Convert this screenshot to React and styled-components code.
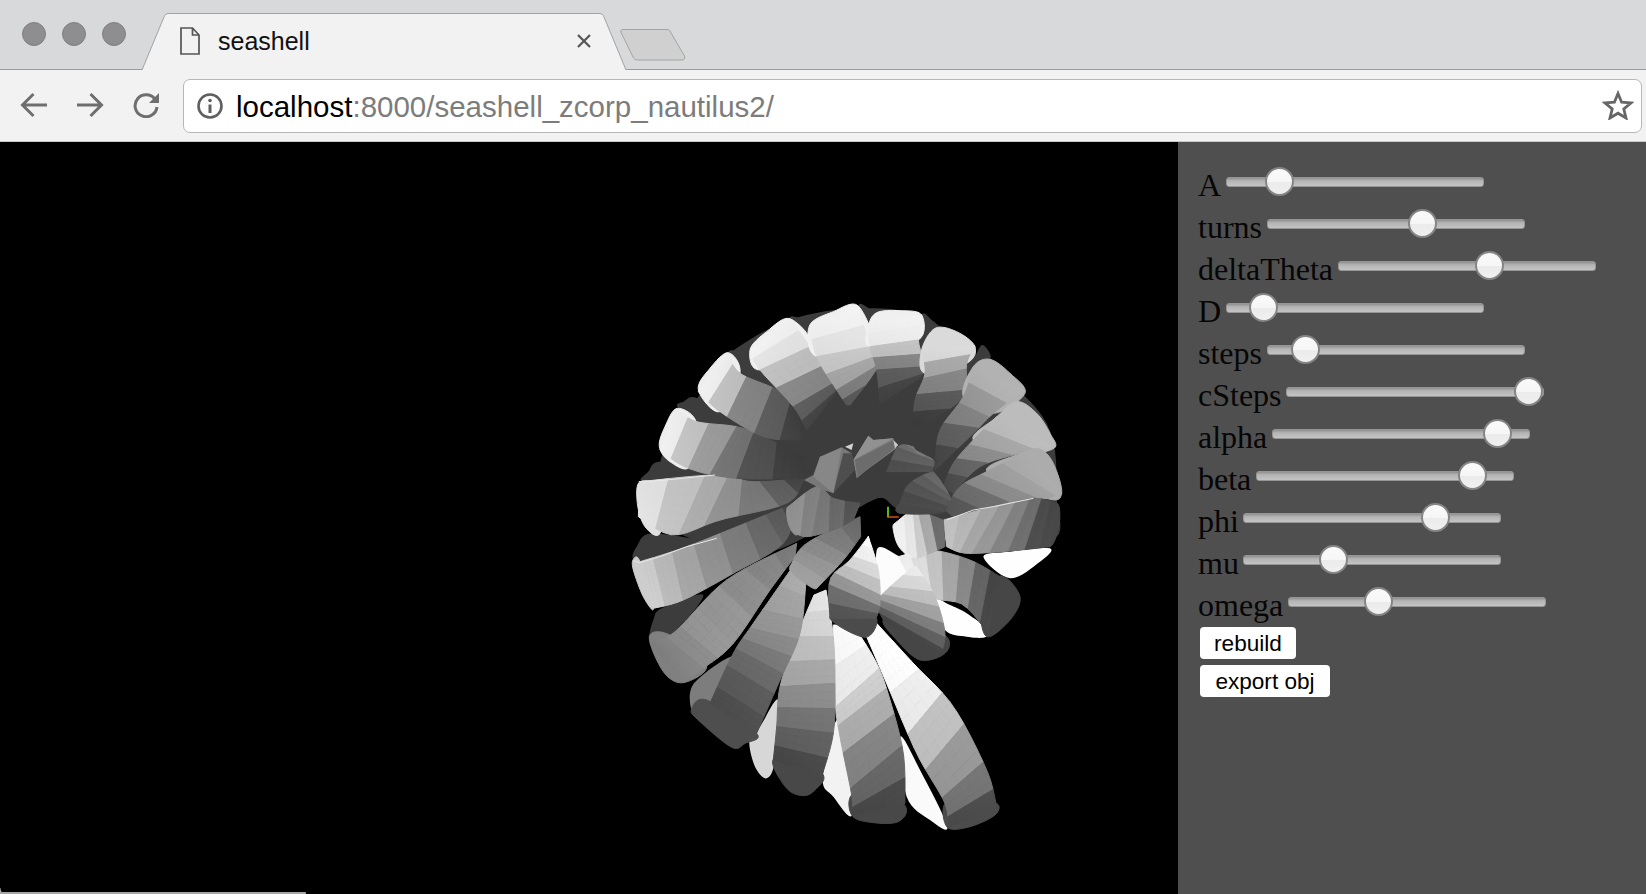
import React from 'react';
import styled, { createGlobalStyle } from 'styled-components';

const Global = createGlobalStyle`
  html, body { margin: 0; padding: 0; height: 894px; overflow: hidden; background: #000; }
  #root { height: 894px; }
`;

const Page = styled.div`
  width: 1646px; height: 894px; display: flex; flex-direction: column; overflow: hidden;
`;
const TabStrip = styled.div`
  height: 70px; box-sizing: border-box; background: #d8d9db; border-bottom: 1px solid #9c9c9c;
  display: flex; align-items: flex-start; padding-left: 22px;
`;
const Lights = styled.div`
  display: flex; gap: 16px; margin-top: 22px;
`;
const Light = styled.span`
  width: 24px; height: 24px; box-sizing: border-box; border-radius: 50%;
  background: #8e8e90; border: 1px solid #7f7f81;
`;
const Tab = styled.div`
  position: relative; width: 484px; height: 57px; margin: 13px 0 0 16px; box-sizing: border-box;
  display: flex; align-items: center; padding: 0 34px 0 38px; gap: 18px;
`;
const TabShape = styled.svg`
  position: absolute; left: 0; top: 0; width: 484px; height: 57px;
`;
const TabTitle = styled.span`
  position: relative; flex: 1; font: 25px "Liberation Sans", Arial, sans-serif; color: #111;
`;
const TabIcon = styled.svg`
  position: relative; width: 20px; height: 28px; flex: none; margin-top: -2px;
`;
const CloseIcon = styled.svg`
  position: relative; width: 16px; height: 16px; flex: none; margin-top: -2px;
`;
const NewTab = styled.svg`
  width: 66px; height: 32px; margin: 29px 0 0 -6px; flex: none;
`;
const Toolbar = styled.div`
  height: 72px; box-sizing: border-box; background: #f2f2f2; border-bottom: 1px solid #c9c9c9;
  display: flex; align-items: center; padding: 0 4px 1px 20px;
`;
const NavIcon = styled.svg`
  width: 28px; height: 26px; margin-right: ${p => p.$gap}px; flex: none;
`;
const Omnibox = styled.div`
  flex: 1; height: 54px; box-sizing: border-box; background: #fff; border: 1px solid #b7b7b7; border-radius: 7px;
  display: flex; align-items: center; padding: 0 7px 0 12px; margin-top: 2px;
`;
const InfoIcon = styled.svg`
  width: 28px; height: 28px; flex: none; margin-right: 12px;
`;
const Url = styled.div`
  flex: 1; font: 29.5px "Liberation Sans", Arial, sans-serif; color: #7c7c7c; white-space: nowrap; padding-top: 2px;
`;
const Host = styled.span`
  color: #000;
`;
const StarIcon = styled.svg`
  width: 32px; height: 30px; flex: none; margin-top: -2px;
`;
const Stage = styled.div`
  flex: 1; display: flex; min-height: 0;
`;
const Canvas = styled.div`
  position: relative; width: 1178px; flex: none; background: #000; box-sizing: border-box;
  padding: 148px 0 0 620px;
  &::after {
    content: ''; position: absolute; left: 0; bottom: 0; width: 306px; height: 2px;
    background: #a6a6a6; border-top-right-radius: 1px;
  }
  &::before {
    content: ''; position: absolute; left: 0; bottom: 0; width: 8px; height: 6px;
    background: radial-gradient(circle at 100% 0, transparent 7px, #b4b4b4 8px);
  }
`;
const Shell = styled.svg`
  display: block; width: 460px; height: 600px;
`;
const Panel = styled.div`
  flex: 1; background: #4f4f4f; box-sizing: border-box; padding: 22px 0 0 20px;
  display: flex; flex-direction: column; align-items: flex-start;
`;
const Row = styled.div`
  height: 42px; display: flex; align-items: flex-start;
`;
const Label = styled.label`
  font: 32px/42px "Liberation Serif", "Times New Roman", serif; color: #060606;
`;
const Slider = styled.input`
  -webkit-appearance: none; appearance: none; background: transparent;
  width: 258px; height: 29px; margin: 3px 0 0 4.5px; padding: 0; display: block;
  &::-webkit-slider-runnable-track {
    height: 10px; box-sizing: border-box; border-radius: 3px; border: 1px solid #969696;
    background: linear-gradient(#8f8f8f 0, #b4b4b4 35%, #c4c4c4 100%);
  }
  &::-webkit-slider-thumb {
    -webkit-appearance: none; appearance: none; width: 29px; height: 29px; margin-top: -10.5px;
    box-sizing: border-box; border-radius: 50%; border: 2px solid #858585;
    background: linear-gradient(#fafafa 0, #f6f6f6 50%, #ebebeb 52%, #f0f0f0 100%);
  }
`;
const Action = styled.button`
  width: ${p => p.$w}px; height: 32px; box-sizing: border-box; border: 0; border-radius: 4px; background: #fff; color: #000;
  font: 22.6px "Liberation Sans", Arial, sans-serif; padding: 2px 0 0; margin: 1px 0 5px 2px; display: block;
`;

const sliders = [
  ['A', 168], ['turns', 619], ['deltaTheta', 599], ['D', 99], ['steps', 102], ['cSteps', 1000],
  ['alpha', 924], ['beta', 886], ['phi', 778], ['mu', 329], ['omega', 333],
];

/* ---- the shell drawing: units are 1/3 px, origin at page (620,290) ---- */
const z5 = pts => pts.map(([x, y]) => [x, y + 750]);
const segment = (a, b, c, d, f) => [0, 1].map(k =>
  0.5 * (2 * b[k] + (c[k] - a[k]) * f + (2 * a[k] - 5 * b[k] + 4 * c[k] - d[k]) * f * f + (3 * b[k] - a[k] - 3 * c[k] + d[k]) * f * f * f));
const cr = (p, t) => {
  const n = p.length - 1;
  const s = Math.min(t * n, n - 1e-6);
  const i = Math.floor(s);
  return segment(p[Math.max(i - 1, 0)], p[i], p[i + 1], p[Math.min(i + 2, n)], s - i);
};
const smooth = p => {
  const out = [];
  const n = p.length;
  for (let i = 0; i < n; i++) {
    for (let k = 0; k < 8; k++) out.push(segment(p[(i + n - 1) % n], p[i], p[(i + 1) % n], p[(i + 2) % n], k / 8));
  }
  return out;
};
const grey = v => { const c = Math.max(0, Math.min(255, Math.round(v))); return `rgb(${c},${c},${c})`; };
const poly = pts => pts.map(p => p[0].toFixed(1) + ',' + p[1].toFixed(1)).join(' ');
const buildRib = ({ l, r, s, sub = 3, cols = 5, cap, capC }) => {
  const out = [];
  const rows = s.length * sub;
  if (cap) out.push({ pts: smooth(cap), c: capC === undefined ? s[0] : capC });
  for (let i = 0; i < rows; i++) {
    const t0 = i / rows, t1 = (i + 1) / rows;
    const major = Math.floor(i / sub);
    const l0 = cr(l, t0), l1 = cr(l, t1), r0 = cr(r, t0), r1 = cr(r, t1);
    for (let j = 0; j < cols; j++) {
      const a = j / cols, b = (j + 1) / cols;
      const mix = (p, q, k) => [p[0] + (q[0] - p[0]) * k, p[1] + (q[1] - p[1]) * k];
      const v = s[major] + (a - 0.5) * 5 + ((i % sub) - 1) * -1;
      out.push({ pts: [mix(l0, r0, a), mix(l0, r0, b), mix(l1, r1, b), mix(l1, r1, a)], c: v });
    }
  }
  return out;
};

const D = 60; // interior dark
const patches = [
  // dark backing silhouette
  { pts: [[330,190],[510,90],[715,55],[905,80],[1090,210],[1280,400],[1310,620],[1290,750],[980,690],[840,660],[790,625],[740,640],[600,720],[400,790],[140,700],[130,480],[250,300]], c: D },
  // interior lenses, back to front
  { pts: z5([[840,590],[900,690],[982,860],[930,840],[860,770]]), c: 250 },
  { pts: z5([[650,540],[690,640],[697,825],[640,770],[608,715]]), c: 242 },
  { pts: z5([[475,480],[465,660],[440,715],[405,680],[388,600],[420,560]]), c: 215 },
  { pts: z5([[340,350],[270,490],[240,530],[214,510],[222,430]]), c: 125 },
  { pts: z5([[160,280],[105,300],[88,290],[100,240],[125,205],[250,165]]), c: D },
  { pts: [[290,770],[110,820],[42,810],[50,770],[100,730]], c: D },
  { pts: [[280,555],[75,575],[85,545],[125,515]], c: D },
  { pts: [[172,350],[190,335],[232,325],[340,405],[230,395]], c: D },
  { pts: [[325,190],[350,180],[385,182],[430,250],[360,250]], c: D },
  { pts: [[510,88],[545,85],[570,95],[590,190]], c: D },
  { pts: [[715,50],[745,55],[765,90],[745,170]], c: D },
  { pts: [[905,75],[935,90],[950,115],[905,180]], c: D },
  { pts: [[1085,165],[1112,205],[1060,230]], c: D },
  { pts: z5([[1090,50],[1170,35],[1290,25],[1260,65],[1170,115]]), c: 254 },
  { pts: z5([[945,180],[990,195],[1040,220],[1105,270],[1095,292],[1040,290],[975,270]]), c: 254 },
  { pts: z5([[770,30],[830,45],[880,85],[790,190]]), c: 252 },
];

const ribs = [
  // tail, biggest first
  { l: z5([[740,290],[800,430],[890,640],[975,790],[982,862]]), r: z5([[770,250],[880,370],[1000,500],[1100,690],[1130,800]]),
    s: [255,253,236,192,152,116,76], capC: 76, cap: z5([[982,862],[1050,860],[1125,825],[1130,790],[1050,780],[975,790]]) },
  { l: z5([[640,255],[645,480],[660,590],[695,765],[697,825]]), r: z5([[700,255],[770,370],[810,480],[850,640],[855,790]]),
    s: [250,236,205,172,132,102,72], capC: 72, cap: z5([[697,828],[760,848],[835,845],[857,800],[780,740],[695,765]]) },
  { l: z5([[582,165],[530,290],[480,440],[470,560],[460,660]]), r: z5([[618,150],[640,290],[645,430],[640,580],[605,710]]),
    s: [228,212,190,166,140,115,95,72], capC: 72, cap: z5([[458,662],[500,745],[550,767],[585,750],[610,705],[530,640]]) },
  { l: z5([[515,85],[400,250],[340,340],[270,490]]), r: z5([[558,120],[540,280],[480,420],[410,580]]),
    s: [172,162,150,136,120,105,90,78], capC: 78, cap: z5([[214,510],[260,480],[410,580],[375,610],[335,622],[240,545]]) },
  { l: z5([[530,10],[320,120],[165,275],[90,310]]), r: z5([[525,50],[450,150],[340,310],[250,385],[190,428]]),
    s: [125,135,142,150,150,140,132,128], cols: 6, capC: 128, cap: z5([[88,290],[150,285],[260,375],[190,428],[130,395]]) },
  { l: [[60,815],[200,770],[400,690],[522,640]], r: [[100,955],[190,930],[340,850],[490,760],[522,660]],
    s: [205,185,165,145,125,105,92,72], cols: 6, cap: [[40,808],[60,815],[100,955],[70,920],[40,840]] },
  { l: [[60,575],[285,555],[400,575],[550,565]], r: [[55,680],[160,735],[300,690],[500,640],[550,570]],
    s: [225,195,172,145,120,95,70], cols: 6, cap: [[60,575],[52,640],[75,710],[120,730],[130,600]] },
  { l: [[172,360],[230,395],[350,410],[430,440],[550,500]], r: [[120,480],[205,535],[350,565],[550,565]],
    s: [238,195,155,115,80,62], sub: 4, cap: [[172,355],[135,410],[118,470],[150,515],[210,530],[230,400]] },
  { l: [[325,190],[360,250],[480,305],[540,380]], r: [[235,305],[300,365],[430,440],[540,450]],
    s: [238,192,132,92,65], sub: 4, cap: [[325,188],[270,235],[235,300],[300,365],[360,250]] },
  { l: [[510,88],[570,170],[640,280],[640,320]], r: [[390,185],[420,240],[520,350],[560,420]],
    s: [240,226,190,135,92,68], cap: [[510,86],[440,125],[390,180],[420,240],[570,170]] },
  { l: [[570,110],[590,200],[650,300],[680,345]], r: [[715,50],[750,170],[775,225],[690,345]],
    s: [240,226,198,165,125,88], cap: [[715,48],[640,65],[568,108],[590,200],[750,170]] },
  { l: [[745,100],[750,170],[770,240],[780,340]], r: [[905,75],[895,150],[915,230],[900,265]],
    s: [240,235,192,132,92,68], cap: [[745,110],[770,68],[840,62],[905,75],[895,150],[750,170]] },
  { l: [[905,180],[915,250],[885,330],[880,410]], r: [[1065,170],[1040,220],[1030,320],[920,400]],
    s: [218,168,132,88,62], sub: 4, cap: [[905,180],[945,115],[1010,125],[1065,170],[1040,220],[915,250]] },
  { l: [[1060,230],[1030,320],[960,420],[945,520]], r: [[1210,300],[1120,370],[1060,430],[945,540]],
    s: [178,152,130,95,70], sub: 4, cap: [[1060,230],[1110,208],[1170,250],[1215,310],[1120,370],[1030,320]] },
  { l: [[1130,380],[1060,450],[1000,520],[970,590]], r: [[1300,470],[1200,490],[1080,530],[1000,610]],
    s: [188,166,140,100,76], sub: 4, cap: [[1125,385],[1190,335],[1250,370],[1290,430],[1302,475],[1200,490],[1060,450]] },
  { l: [[1210,490],[1100,545],[1020,590],[975,660]], r: [[1325,610],[1280,625],[1180,660],[1000,680]],
    s: [172,160,140,110,88], sub: 4, cap: [[1205,490],[1260,478],[1300,520],[1325,610],[1280,625],[1100,545]] },
  { l: [[1310,640],[1240,625],[1120,650],[970,690]], r: [[1290,770],[1180,782],[1040,790],[980,770]],
    s: [72,76,110,130,150,165,182,192], sub: 2, capC: 72, cap: [[1308,640],[1318,700],[1290,770],[1240,720]] },
  // inner turn
  { l: z5([[1140,110],[1050,60],[930,30],[835,50]]), r: z5([[1105,280],[1030,195],[945,175],[880,130]]),
    s: [70,100,135,165,195,222,238], sub: 2, capC: 70, cap: z5([[1140,108],[1200,170],[1170,240],[1100,290],[1085,200]]) },
  { l: z5([[880,80],[800,150],[770,190],[790,240]]), r: z5([[890,80],[945,170],[975,280],[960,350]]),
    s: [235,215,190,160,125,95,70], sub: 2, cols: 4, capC: 70, cap: z5([[790,240],[830,300],[900,360],[975,340],[980,290],[880,240]]) },
  { l: z5([[745,-10],[690,60],[630,120],[630,235]]), r: z5([[745,-10],[775,90],[780,190],[768,235]]),
    s: [255,240,215,190,150,110,85], sub: 2, capC: 75, cap: z5([[630,235],[735,292],[770,235],[700,200]]) },
  { l: [[510,830],[560,760],[720,680]], r: [[590,895],[670,810],[722,740]],
    s: [160,150,140,125,110], cols: 6, capC: 160, cap: [[510,830],[530,860],[590,895],[560,800]] },
  { l: [[720,640],[640,625],[590,590],[505,650]], r: [[700,690],[640,720],[560,740],[520,725]],
    s: [85,105,120,130,145], capC: 145, cap: [[505,650],[505,700],[530,735],[560,690]] },
  { l: [[970,690],[900,665],[870,665],[825,700]], r: [[975,770],[930,790],[880,802],[830,750]],
    s: [110,170,205,230,240], cols: 4, capC: 240, cap: [[825,700],[822,730],[840,775],[880,800],[880,720]] },
  { l: [[840,640],[860,590],[900,560],[940,545]], r: [[975,665],[985,640],[990,620],[960,570]],
    s: [75,85,95,105], cap: [[840,640],[840,670],[975,665],[900,620]], capC: 72 },
  { l: [[800,545],[835,470],[880,470]], r: [[935,545],[940,510],[890,490]],
    s: [80,95,110,120] },
].map(buildRib);

const spikes = [
  { pts: [[700,510],[745,437],[760,450],[820,445],[830,475],[740,540],[710,565]], c: 128 },
  { pts: [[705,510],[820,450],[825,475],[712,560]], c: 108 },
  { pts: [[760,450],[820,445],[700,510],[745,437]], c: 145 },
  { pts: [[600,500],[640,490],[665,472],[695,490],[700,520],[640,610],[610,600],[552,570],[580,555]], c: 120 },
  { pts: [[640,610],[670,490],[695,490],[705,540]], c: 78 },
  { pts: [[600,500],[665,472],[640,610],[580,560]], c: 135 },
  { pts: [[675,470],[700,460],[695,480]], c: 210 },
  { pts: [[820,450],[835,465],[825,475]], c: 200 },
];

const rims = [
  [[40,812],[60,818],[120,800],[200,770],[290,745]],
  [[56,575],[120,572],[285,555]],
  [[980,690],[1060,660],[1120,650],[1240,625]],
];

const ShellDrawing = () => (
  <Shell viewBox="0 0 1380 1800" aria-hidden="true">
    {patches.map((p, i) => <polygon key={'p' + i} points={poly(smooth(p.pts))} fill={grey(p.c)} />)}
    {ribs.map((rib, i) => (
      <g key={'r' + i}>
        {rib.map((q, j) => <polygon key={j} points={poly(q.pts)} fill={grey(q.c)} stroke={grey(q.c)} strokeWidth="3" />)}
      </g>
    ))}
    {spikes.map((p, i) => <polygon key={'s' + i} points={poly(p.pts)} fill={grey(p.c)} />)}
    {rims.map((p, i) => <polyline key={'m' + i} points={poly(p)} fill="none" stroke="#e8e8e8" strokeWidth="3" />)}
    <path d="M804 650V682" stroke="#5de01e" strokeWidth="5" />
    <path d="M802 681H836" stroke="#ee5a12" strokeWidth="4" />
  </Shell>
);

export default function App() {
  return (
    <Page>
      <Global />
      <TabStrip>
        <Lights><Light /><Light /><Light /></Lights>
        <Tab>
          <TabShape viewBox="0 0 484 57" aria-hidden="true">
            <path d="M0 57L22 4C23 1.500 24 .5 27 .5H457C460 .5 461 1.500 462 4L484 57" fill="#f2f2f2" stroke="#a2a2a2" strokeWidth="1" />
          </TabShape>
          <TabIcon viewBox="0 0 20 28" aria-hidden="true">
            <path d="M1 1H12.500L19 8V27H1Z M12.500 1V8H19" fill="none" stroke="#555" strokeWidth="1.700" />
          </TabIcon>
          <TabTitle>seashell</TabTitle>
          <CloseIcon viewBox="0 0 16 16" aria-hidden="true">
            <path d="M2 2L14 14M14 2L2 14" stroke="#555" strokeWidth="2.200" />
          </CloseIcon>
        </Tab>
        <NewTab viewBox="0 0 66 32" aria-hidden="true">
          <path d="M3 .5H47C49 .5 50 1.500 50.500 3L64.500 27C65.500 30 64 31 62 31H18C15 31 14 30 13 28L.8 3C.3 1.500 1.500 .5 3 .5Z" fill="#d0d0d0" stroke="#a4a4a4" />
        </NewTab>
      </TabStrip>
      <Toolbar>
        <NavIcon $gap={28} viewBox="0 0 28 26" aria-hidden="true">
          <path d="M27 13H3M13.500 2L2.500 13L13.500 24" fill="none" stroke="#6e6e6e" strokeWidth="3" />
        </NavIcon>
        <NavIcon $gap={28} viewBox="0 0 28 26" aria-hidden="true">
          <path d="M1 13H25M14.500 2L25.500 13L14.500 24" fill="none" stroke="#6e6e6e" strokeWidth="3" />
        </NavIcon>
        <NavIcon $gap={23} viewBox="0 0 28 26" aria-hidden="true">
          <path d="M23.500 8A11 11 0 1 0 25 15" fill="none" stroke="#6e6e6e" strokeWidth="3" />
          <path d="M27 1V11H17Z" fill="#6e6e6e" />
        </NavIcon>
        <Omnibox>
          <InfoIcon viewBox="0 0 28 28" aria-hidden="true">
            <circle cx="14" cy="14" r="11.500" fill="none" stroke="#5f5f5f" strokeWidth="2.600" />
            <path d="M14 12.500V21" stroke="#5f5f5f" strokeWidth="3" />
            <circle cx="14" cy="8.500" r="1.800" fill="#5f5f5f" />
          </InfoIcon>
          <Url><Host>localhost</Host>:8000/seashell_zcorp_nautilus2/</Url>
          <StarIcon viewBox="0 0 32 30" aria-hidden="true">
            <path d="M16 3.500L19.600 12.200L29 12.900L21.800 19L24 28L16 23.200L8 28L10.200 19L3 12.900L12.400 12.200Z" fill="none" stroke="#666" strokeWidth="2.800" />
          </StarIcon>
        </Omnibox>
      </Toolbar>
      <Stage>
        <Canvas><ShellDrawing /></Canvas>
        <Panel>
          {sliders.map(([name, value]) => (
            <Row key={name}>
              <Label htmlFor={name}>{name}</Label>
              <Slider id={name} type="range" min="0" max="1000" defaultValue={value} />
            </Row>
          ))}
          <Action $w={96}>rebuild</Action>
          <Action $w={130}>export obj</Action>
        </Panel>
      </Stage>
    </Page>
  );
}
